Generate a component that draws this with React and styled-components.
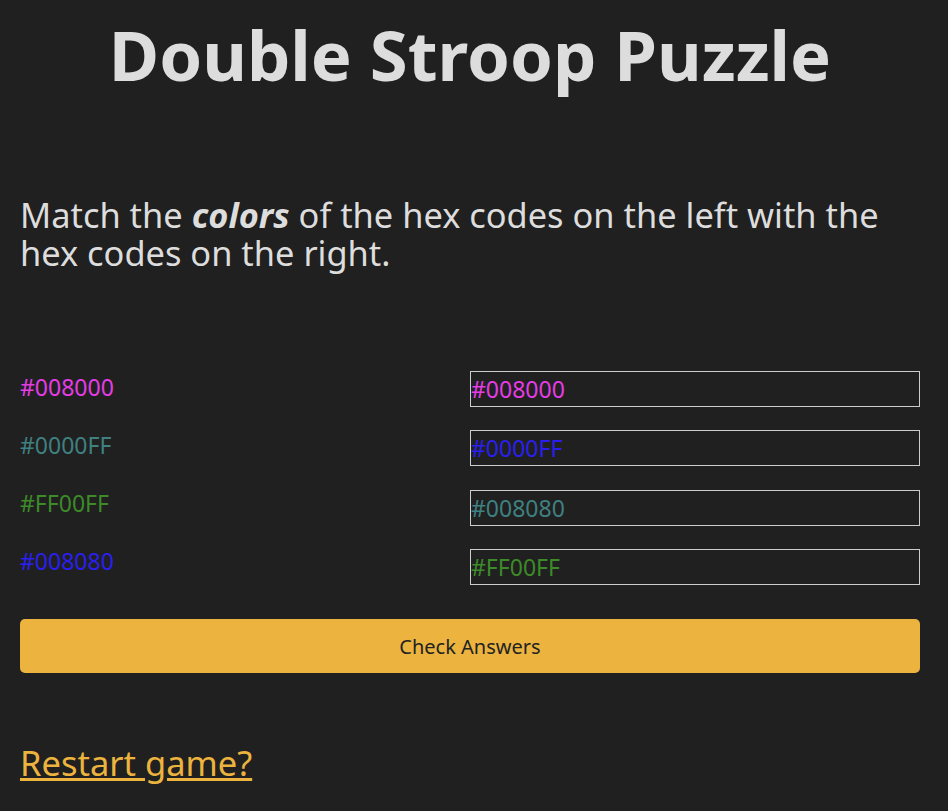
import React from 'react';
import styled, { createGlobalStyle } from 'styled-components';

const GlobalStyle = createGlobalStyle`
  body {
    margin: 0;
    background-color: #202020;
    color: #dddddd;
    font-family: "Noto Sans", "Open Sans", sans-serif;
  }
`;

const colorMap = {
  magenta: '#e53ce6',
  teal: '#3f8080',
  green: '#3d8a28',
  blue: '#2a1ff0',
};

const leftCodes = [
  { text: '#008000', color: 'magenta' },
  { text: '#0000FF', color: 'teal' },
  { text: '#FF00FF', color: 'green' },
  { text: '#008080', color: 'blue' },
];

const rightCodes = [
  { text: '#008000', color: 'magenta' },
  { text: '#0000FF', color: 'blue' },
  { text: '#008080', color: 'teal' },
  { text: '#FF00FF', color: 'green' },
];

const App = () => {
  return (
    <>
      <GlobalStyle />
      <Page>
        <Title>Double Stroop Puzzle</Title>
        <Instructions>
          Match the <em>colors</em> of the hex codes on the left with the hex codes on the right.
        </Instructions>
        <Board>
          <LeftColumn>
            {leftCodes.map((c, i) => (
              <HexLabel key={i} color={colorMap[c.color]}>{c.text}</HexLabel>
            ))}
          </LeftColumn>
          <RightColumn>
            {rightCodes.map((c, i) => (
              <HexBox key={i} color={colorMap[c.color]}>{c.text}</HexBox>
            ))}
          </RightColumn>
        </Board>
        <CheckButton>Check Answers</CheckButton>
        <RestartLink href="#">Restart game?</RestartLink>
      </Page>
    </>
  );
};

export default App;

const Page = styled.div`
  padding: 0 28px 20px 20px;
  min-height: 811px;
  box-sizing: border-box;
`;

const Title = styled.h1`
  margin: 0;
  padding-top: 12px;
  text-align: center;
  font-size: 68.8px;
  font-weight: 700;
  line-height: 84px;
  color: #dddddd;
`;

const Instructions = styled.p`
  margin: 100px 0 0;
  font-size: 34.4px;
  line-height: 38px;
  em {
    font-weight: 700;
  }
`;

const Board = styled.div`
  display: grid;
  grid-template-columns: 1fr 1fr;
  margin-top: 99px;
`;

const LeftColumn = styled.div`
  display: flex;
  flex-direction: column;
  gap: 22px;
`;

const RightColumn = styled.div`
  display: flex;
  flex-direction: column;
  gap: 23.4px;
`;

const HexLabel = styled.div`
  height: 36px;
  font-size: 23px;
  line-height: 33px;
  color: ${(props) => props.color};
`;

const HexBox = styled.div`
  height: 36px;
  box-sizing: border-box;
  border: 1px solid #cccccc;
  font-size: 23px;
  line-height: 34px;
  color: ${(props) => props.color};
`;

const CheckButton = styled.button`
  display: block;
  width: 100%;
  height: 54px;
  margin-top: 34px;
  border: none;
  border-radius: 5px;
  background-color: #ecb43f;
  color: #222222;
  font-family: "Noto Sans", "Open Sans", sans-serif;
  font-size: 20px;
  cursor: pointer;
`;

const RestartLink = styled.a`
  display: inline-block;
  margin-top: 67px;
  font-size: 34.5px;
  line-height: 46px;
  color: #ecb43f;
`;
